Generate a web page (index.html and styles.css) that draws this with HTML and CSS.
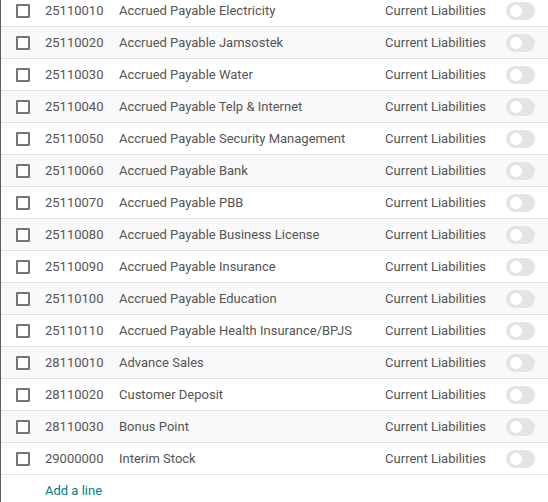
FILE: index.html
```html
<!DOCTYPE html>
<html>
<head>
<meta charset="utf-8">
<link rel="stylesheet" href="styles.css">
</head>
<body>
<div class="list">
  <div class="row"><span class="cb"></span><span class="code">25110010</span><span class="name">Accrued Payable Electricity</span><span class="type">Current Liabilities</span><span class="tcell"><span class="toggle"></span></span></div>
  <div class="row"><span class="cb"></span><span class="code">25110020</span><span class="name">Accrued Payable Jamsostek</span><span class="type">Current Liabilities</span><span class="tcell"><span class="toggle"></span></span></div>
  <div class="row"><span class="cb"></span><span class="code">25110030</span><span class="name">Accrued Payable Water</span><span class="type">Current Liabilities</span><span class="tcell"><span class="toggle"></span></span></div>
  <div class="row"><span class="cb"></span><span class="code">25110040</span><span class="name">Accrued Payable Telp &amp; Internet</span><span class="type">Current Liabilities</span><span class="tcell"><span class="toggle"></span></span></div>
  <div class="row"><span class="cb"></span><span class="code">25110050</span><span class="name">Accrued Payable Security Management</span><span class="type">Current Liabilities</span><span class="tcell"><span class="toggle"></span></span></div>
  <div class="row"><span class="cb"></span><span class="code">25110060</span><span class="name">Accrued Payable Bank</span><span class="type">Current Liabilities</span><span class="tcell"><span class="toggle"></span></span></div>
  <div class="row"><span class="cb"></span><span class="code">25110070</span><span class="name">Accrued Payable PBB</span><span class="type">Current Liabilities</span><span class="tcell"><span class="toggle"></span></span></div>
  <div class="row"><span class="cb"></span><span class="code">25110080</span><span class="name">Accrued Payable Business License</span><span class="type">Current Liabilities</span><span class="tcell"><span class="toggle"></span></span></div>
  <div class="row"><span class="cb"></span><span class="code">25110090</span><span class="name">Accrued Payable Insurance</span><span class="type">Current Liabilities</span><span class="tcell"><span class="toggle"></span></span></div>
  <div class="row"><span class="cb"></span><span class="code">25110100</span><span class="name">Accrued Payable Education</span><span class="type">Current Liabilities</span><span class="tcell"><span class="toggle"></span></span></div>
  <div class="row"><span class="cb"></span><span class="code">25110110</span><span class="name">Accrued Payable Health Insurance/BPJS</span><span class="type">Current Liabilities</span><span class="tcell"><span class="toggle"></span></span></div>
  <div class="row"><span class="cb"></span><span class="code">28110010</span><span class="name">Advance Sales</span><span class="type">Current Liabilities</span><span class="tcell"><span class="toggle"></span></span></div>
  <div class="row"><span class="cb"></span><span class="code">28110020</span><span class="name">Customer Deposit</span><span class="type">Current Liabilities</span><span class="tcell"><span class="toggle"></span></span></div>
  <div class="row"><span class="cb"></span><span class="code">28110030</span><span class="name">Bonus Point</span><span class="type">Current Liabilities</span><span class="tcell"><span class="toggle"></span></span></div>
  <div class="row"><span class="cb"></span><span class="code">29000000</span><span class="name">Interim Stock</span><span class="type">Current Liabilities</span><span class="tcell"><span class="toggle"></span></span></div>
  <div class="add"><a class="addlink">Add a line</a></div>
</div>
</body>
</html>
```

FILE: styles.css
```css
html, body {
  margin: 0;
  padding: 0;
  background: #fff;
}
body {
  font-family: Roboto, "Liberation Sans", sans-serif;
  font-size: 13px;
  color: #4c4c4c;
  overflow: hidden;
}
.list {
  margin-top: -5px;
  border-left: 1px solid #5f5f5f;
}
.row {
  display: grid;
  grid-template-columns: 44px 74px 1fr auto 62px;
  align-items: center;
  height: 32px;
  box-sizing: border-box;
  border-bottom: 1px solid #dee2e6;
}
.row:nth-child(even) {
  background: #f9f9f9;
}
.cb {
  justify-self: start;
  margin-left: 15px;
  width: 14px;
  height: 14px;
  box-sizing: border-box;
  border: 2px solid #757575;
  border-radius: 1px;
  background: #fff;
}
.code, .name, .type {
  white-space: nowrap;
  color: #555;
}
.type {
  text-align: right;
}
.tcell {
  display: flex;
  padding-left: 20px;
}
.toggle {
  display: block;
  position: relative;
  width: 29px;
  height: 18px;
  border-radius: 9px;
  background: #e4e4e4;
}
.toggle::after {
  content: "";
  position: absolute;
  left: 4px;
  top: 3px;
  width: 12px;
  height: 12px;
  border-radius: 50%;
  background: #fff;
}
.add {
  height: 30px;
  display: flex;
  align-items: center;
  padding-left: 44px;
}
.addlink {
  color: #017e84;
}
```
